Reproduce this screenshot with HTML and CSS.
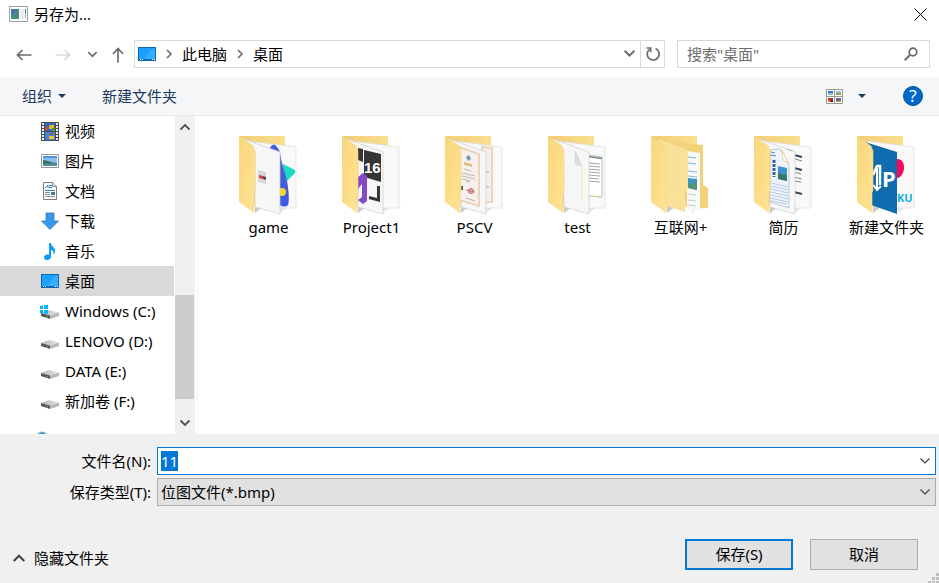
FILE: index.html
```html
<!DOCTYPE html>
<html lang="zh-CN">
<head>
  <meta charset="UTF-8">
  <meta name="viewport" content="width=device-width, initial-scale=1.0">
  <title>另存为...</title>
  <link rel="stylesheet" href="styles.css">
</head>
<body>
  <!-- Shared icon parts -->
  <svg class="defs" width="0" height="0" aria-hidden="true">
    <defs>
      <linearGradient id="flap-fill" x1="0" y1="0" x2="1" y2="1">
        <stop offset="0" stop-color="#f8d77c"/>
        <stop offset="1" stop-color="#ffe394"/>
      </linearGradient>
      <linearGradient id="back-fill" x1="0" y1="0" x2="1" y2="0">
        <stop offset="0" stop-color="#f1cd73"/>
        <stop offset="1" stop-color="#fadf8f"/>
      </linearGradient>
      <linearGradient id="shadow-fill" x1="0" y1="0" x2="1" y2="0">
        <stop offset="0" stop-color="#c8c8c8"/>
        <stop offset="1" stop-color="#ffffff"/>
      </linearGradient>
      <linearGradient id="drive-top" x1="0" y1="0" x2="1" y2="0">
        <stop offset="0" stop-color="#b4b4b4"/>
        <stop offset="1" stop-color="#e6e6e8"/>
      </linearGradient>
      <symbol id="folder-back" viewBox="0 0 62 80">
        <path d="M17 78l8-6-8-2zM42 78l8-6-8-4zM56 73l7-3-6-4z" fill="url(#shadow-fill)"/>
        <path d="M1 1h46v71H17z" fill="url(#back-fill)"/>
      </symbol>
      <symbol id="paper-back" viewBox="0 0 62 80">
        <path d="M11 6l47 6v61H40z" fill="#f9f9fa" stroke="#dcdcdc" stroke-width=".7"/>
      </symbol>
      <symbol id="paper-front" viewBox="0 0 62 80">
        <path d="M3 3l39 14v62l-25-7V16z" fill="#f7f7f8" stroke="#cfcfcf" stroke-width=".7"/>
      </symbol>
      <symbol id="folder-flap" viewBox="0 0 62 80">
        <path d="M1 1l14 10 2 5v39l-1 3v20L1 67z" fill="url(#flap-fill)"/>
        <path d="M1 1l14 10 2 5v39l-1 3v20" fill="none" stroke="#f3d384" stroke-width=".6"/>
      </symbol>
      <symbol id="icon-desktop" viewBox="0 0 18 14">
        <path d="M0 0h18v14H0z" fill="#0a6ab6"/>
        <path d="M1 1h16v11H1z" fill="#1ba1fb"/>
        <path d="M17 1v11H6L12 4z" fill="#36adff"/>
        <path d="M2 12h1v1H2zM4 12h1v1H4zM14 12h1v1h-1zM16 12h1v1h-1z" fill="#fff"/>
      </symbol>
      <symbol id="icon-drive" viewBox="0 0 18 18">
        <path d="M0 11l8-3 10 2.500-9 3z" fill="url(#drive-top)"/>
        <path d="M0 11l9 2.500V17l-9-3z" fill="#555756"/>
        <path d="M9 13.500l9-3V14l-9 3z" fill="#b8b8bc"/>
        <path d="M5 14l2 .5v1L5 15z" fill="#59c043"/>
      </symbol>
      <symbol id="icon-chevron" viewBox="0 0 12 12">
        <path d="M1.500 3.500L6 8l4.500-4.500" fill="none" stroke="currentColor" stroke-width="1.200"/>
      </symbol>
      <symbol id="icon-chevron-bold" viewBox="0 0 12 12">
        <path d="M1.500 3.500L6 8l4.500-4.500" fill="none" stroke="currentColor" stroke-width="1.800"/>
      </symbol>
      <symbol id="icon-chevron-right" viewBox="0 0 12 12">
        <path d="M4 2l4 4-4 4" fill="none" stroke="currentColor" stroke-width="1.600"/>
      </symbol>
      <symbol id="icon-triangle" viewBox="0 0 8 4">
        <path d="M0 0h8L4 4z" fill="currentColor"/>
      </symbol>
    </defs>
  </svg>

  <div class="dialog">
    <header class="titlebar">
      <svg class="app-icon" width="19" height="16" viewBox="0 0 19 16">
        <path d="M.5.500h18v15H.5z" fill="#fff" stroke="#9a9fa3"/>
        <path d="M2 3h8v10H2z" fill="#4a8a80"/>
        <path d="M2 3h8l-8 7z" fill="#4878a4"/>
        <path d="M11 3h4v10h-4z" fill="#eceef2"/>
        <path d="M16 3h1v4h-1z" fill="#3c6da0"/>
        <path d="M16 7h1v5h-1z" fill="#8fbfa4"/>
      </svg>
      <h1>另存为...</h1>
      <button type="button" class="close" aria-label="关闭">
        <svg width="13" height="13" viewBox="0 0 13 13"><path d="M.5.500l12 12M12.500.500l-12 12" stroke="#000"/></svg>
      </button>
    </header>

    <nav class="navbar">
      <div class="nav-buttons">
        <button type="button" class="back" aria-label="后退">
          <svg width="16" height="12" viewBox="0 0 16 12"><path d="M15.500 6H1.500M6.500 1l-5 5 5 5" fill="none" stroke="currentColor" stroke-width="1.700"/></svg>
        </button>
        <button type="button" class="forward" aria-label="前进" disabled>
          <svg width="16" height="12" viewBox="0 0 16 12"><path d="M.5 6h14M9.500 1l5 5-5 5" fill="none" stroke="currentColor" stroke-width="1.700"/></svg>
        </button>
        <button type="button" class="recent" aria-label="最近的位置">
          <svg width="11" height="11"><use href="#icon-chevron-bold"/></svg>
        </button>
        <button type="button" class="up" aria-label="上移">
          <svg width="12" height="16" viewBox="0 0 12 16"><path d="M6 15.500V1.500M1 7l5-5.500L11 7" fill="none" stroke="currentColor" stroke-width="1.700"/></svg>
        </button>
      </div>
      <div class="address">
        <svg width="18" height="14"><use href="#icon-desktop"/></svg>
        <svg class="crumb-arrow" width="12" height="12"><use href="#icon-chevron-right"/></svg>
        <a href="#">此电脑</a>
        <svg class="crumb-arrow" width="12" height="12"><use href="#icon-chevron-right"/></svg>
        <a href="#">桌面</a>
        <button type="button" class="history" aria-label="历史记录">
          <svg width="13" height="13"><use href="#icon-chevron-bold"/></svg>
        </button>
        <button type="button" class="refresh" aria-label="刷新">
          <svg width="16" height="16" viewBox="0 0 16 16"><path d="M10.500 2.500a6 6 0 1 1-6 .8M1.500 2h4.200v4.300" fill="none" stroke="currentColor" stroke-width="1.700"/></svg>
        </button>
      </div>
      <label class="search">
        <input type="search" placeholder='搜索"桌面"' aria-label="搜索">
        <svg width="14" height="14" viewBox="0 0 14 14"><circle cx="9" cy="5" r="3.800" fill="none" stroke="currentColor" stroke-width="1.700"/><path d="M6.200 7.800L.8 13.200" stroke="currentColor" stroke-width="2"/></svg>
      </label>
    </nav>

    <div class="toolbar">
      <button type="button">组织 <svg width="8" height="4"><use href="#icon-triangle"/></svg></button>
      <button type="button">新建文件夹</button>
      <button type="button" class="view" aria-label="更改视图">
        <svg width="17" height="15" viewBox="0 0 17 15">
          <path d="M.5.500h16v14H.5zM8.500.500v14M.5 7.500h16" fill="#fff" stroke="#989898"/>
          <path d="M2 2h5v2H2z" fill="#2c7bd0"/><path d="M2 4h5v2H2z" fill="#8cc6c4"/>
          <path d="M10 2h5v2h-5z" fill="#8fc1e8"/><path d="M10 4h5v2h-5z" fill="#79a64a"/><path d="M12 3h2v2h-2z" fill="#e0a33b"/>
          <path d="M2 9h5v4H2z" fill="#c72a1e"/><path d="M5 11h2v2H5z" fill="#453011"/><path d="M2 11h2v2H2z" fill="#e6812d"/>
          <path d="M10 9h5v4h-5z" fill="#2877cd"/><path d="M12 9h2v2h-2z" fill="#d34a2c"/><path d="M10 12h5v1h-5z" fill="#d9ae26"/>
        </svg>
        <svg width="8" height="4"><use href="#icon-triangle"/></svg>
      </button>
      <button type="button" class="help" aria-label="帮助">?</button>
    </div>

    <main class="browser">
      <ul class="tree">
        <li><a href="#">
          <svg width="18" height="19" viewBox="0 0 18 19">
            <path d="M0 0h18v19H0z" fill="#4a4a4a"/>
            <path d="M4 1h10v8H4z" fill="#356ac4"/><path d="M4 10h10v8H4z" fill="#4386dc"/>
            <path d="M8 3h5v4H8z" fill="#e6b829"/><path d="M4 5h3v3H4z" fill="#c64839"/><path d="M11 6h3v3h-3z" fill="#4a9a3c"/>
            <path d="M8 14h5v3H8z" fill="#edc738"/><path d="M9 11h3v2H9z" fill="#cb4735"/>
            <path d="M2 1v18M16 1v18" stroke="#f4f4f4" stroke-width="2" stroke-dasharray="2 1"/>
          </svg>视频</a></li>
        <li><a href="#">
          <svg width="18" height="14" viewBox="0 0 18 14">
            <path d="M.5.500h17v13H.5z" fill="#fff" stroke="#979797"/>
            <path d="M2 2h14v10H2z" fill="#88c0f0"/><path d="M2 2h14v2H2z" fill="#4b92df"/>
            <path d="M2 6c4 0 8 3 14 3v3H2z" fill="#35705f"/><path d="M2 10l14-1v3H2z" fill="#4f8fa4"/>
          </svg>图片</a></li>
        <li><a href="#">
          <svg width="18" height="18" viewBox="0 0 18 18">
            <path d="M2.500.500h9l4 4v13h-13z" fill="#fff" stroke="#7d7d7d"/>
            <path d="M11.500.500v4h4" fill="#e5e5e5" stroke="#8b8b8b"/>
            <path d="M4 6l3-3v3M8 3.500h3M8 5.500h3M4 8.500h10" fill="none" stroke="#2484c9"/>
            <path d="M4 10.500h5M4 12.500h5M4 14.500h10" stroke="#8d8d8d"/>
            <path d="M10 10h4v3h-4z" fill="#3578aa"/>
          </svg>文档</a></li>
        <li><a href="#">
          <svg width="18" height="18" viewBox="0 0 18 18"><path d="M5 1h8v8h4.500L9 17.500.5 9H5z" fill="#3a99ea" stroke="#2a78be" stroke-width=".8"/></svg>下载</a></li>
        <li><a href="#">
          <svg width="18" height="18" viewBox="0 0 18 18"><path d="M8 1h2c0 4 5 4 4 9-.3 1.700-1 2.500-1.600 3 .9-3-.4-4.600-2.400-5v7c0 2-2 3-4 3s-3-1.200-3-2.600C3 13 6 11.800 8 12.800z" fill="#0c9cf3"/></svg>音乐</a></li>
        <li class="selected"><a href="#">
          <svg width="18" height="14"><use href="#icon-desktop"/></svg>桌面</a></li>
        <li><a href="#">
          <svg width="18" height="18" viewBox="0 0 18 18" overflow="visible">
            <use href="#icon-drive" width="18" height="18"/>
            <path d="M-1 4l3-.5V7h-3zM3 3.300l4-.5V7H3zM-1 8h3v3.500l-3-.5zM3 8h4v4l-4-.4z" fill="#00b4f1"/>
          </svg>Windows (C:)</a></li>
        <li><a href="#"><svg width="18" height="18"><use href="#icon-drive"/></svg>LENOVO (D:)</a></li>
        <li><a href="#"><svg width="18" height="18"><use href="#icon-drive"/></svg>DATA (E:)</a></li>
        <li><a href="#"><svg width="18" height="18"><use href="#icon-drive"/></svg>新加卷 (F:)</a></li>
        <li class="network"><svg width="18" height="3" viewBox="0 0 18 3"><path d="M-4 3c2-3.500 8-3.500 10 0z" fill="#7dbdd2"/><path d="M-1 3l2-2 3 2z" fill="#3c88ad"/></svg></li>
      </ul>

      <div class="scrollbar">
        <button type="button" class="scroll-up" aria-label="向上滚动"><svg width="12" height="12"><use href="#icon-chevron-bold"/></svg></button>
        <div class="track"><div class="thumb"></div></div>
        <button type="button" aria-label="向下滚动"><svg width="12" height="12"><use href="#icon-chevron-bold"/></svg></button>
      </div>

      <ul class="files">
        <li>
          <svg width="62" height="80" viewBox="0 0 62 80">
            <use href="#folder-back"/><use href="#paper-back"/>
            <path d="M45 29l12 6v3L46 49z" fill="#19dcc1"/>
            <path d="M32 13c2-4 5-4 7-1l3 5c1 10 5 20 7 29 1 4 3 21 1 24-3 3-6 1-9 0z" fill="#415ce4"/>
            <path d="M40 14c3 18 7 28 10 45" fill="none" stroke="#655ac1"/>
            <circle cx="44" cy="57" r="4" fill="#f2dc23"/>
            <use href="#paper-front"/>
            <path d="M20 35l8 2v12l-8-2z" fill="#d8d8d8"/>
            <path d="M21 40l4 1v3l-4-1z" fill="#d6413b"/><path d="M25 41l3 1v3l-3-1z" fill="#554747"/>
            <use href="#folder-flap"/>
          </svg>
          <span>game</span>
        </li>
        <li>
          <svg width="62" height="80" viewBox="0 0 62 80">
            <use href="#folder-back"/><use href="#paper-back"/><use href="#paper-front"/>
            <path d="M17 13l5 1v13l-5-2zM23 15l17 4v28l-17-5z" fill="#353535"/>
            <text x="23" y="38" class="art-sixteen">16</text>
            <path d="M37.500 51v14L28 62.500" fill="none" stroke="#353535" stroke-width="3"/>
            <path d="M17 42l5-4 4 3v25l-4 3-5-4 4-3V49l-4 5z" fill="#8548c7"/>
            <use href="#folder-flap"/>
          </svg>
          <span>Project1</span>
        </li>
        <li>
          <svg width="62" height="80" viewBox="0 0 62 80">
            <use href="#folder-back"/><use href="#paper-back"/>
            <path d="M38 12l10 1v54H38z" fill="#f4eeec" stroke="#ecd5bd" stroke-width="2"/>
            <path d="M42 37h3M42 52h3" stroke="#a4a0a0"/>
            <use href="#paper-front"/>
            <path d="M15 12l20 7v52l-20-6z" fill="#f5efed" stroke="#ecd5bd" stroke-width="2"/>
            <path d="M22 22l3-2 2 4-3 2z" fill="#6c97bd"/>
            <path d="M20 27l8 2v3l-8-2z" fill="#dfc28b"/>
            <path d="M20 34l7 2M18 38l13 3M18 41l13 3M18 44l8 2M22 46l4 1M22 63l9 3" stroke="#b0aaaa" stroke-width=".8"/>
            <path d="M17 51h2v4h-2z" fill="#555"/>
            <circle cx="27" cy="56" r="2.500" fill="#e0a3a3" stroke="#c8757b"/>
            <path d="M22 55l9 2" stroke="#c8757b"/>
            <use href="#folder-flap"/>
          </svg>
          <span>PSCV</span>
        </li>
        <li>
          <svg width="62" height="80" viewBox="0 0 62 80">
            <use href="#folder-back"/><use href="#paper-back"/>
            <path d="M40 20l15 2v40l-13-1" fill="#fff" stroke="#b4bcc1"/>
            <path d="M41 21.500l14 2" stroke="#7c8991" stroke-width="1.500"/>
            <path d="M41 28l12 1M41 31l12 1M41 34l12 1M41 37l12 1M41 40l12 1M41 43l11 1M41 46l12 1" stroke="#a5a5a5"/>
            <path d="M46 61l7 1" stroke="#e7ca69"/>
            <use href="#paper-front"/>
            <path d="M17 15l13 1 5 15v36l-18-5z" fill="#f4f6f8"/>
            <path d="M28 17l7 15v34" fill="none" stroke="#f0e3ac"/>
            <path d="M28 16v13l7 2c-4-4-3-10-7-15z" fill="#dedfe1" stroke="#c6c8ca" stroke-width=".5"/>
            <use href="#folder-flap"/>
          </svg>
          <span>test</span>
        </li>
        <li>
          <svg width="62" height="80" viewBox="0 0 62 80">
            <use href="#folder-back"/>
            <path d="M15 6l38 4v40l5 3v20l-20 1z" fill="#f3d379"/>
            <path d="M37 16l13 2v59l-13-3z" fill="#f8f8f8"/>
            <path d="M38 22l8 1M38 28l8 1M38 36l9 1M38 41l9 1" stroke="#73bddb"/>
            <path d="M38 43l9 1v11l-9-2z" fill="#3b95c4"/><path d="M38 50l9-3v8l-9-2z" fill="#54917a"/>
            <path d="M38 59l8 1M38 65l8 1M38 70l8 1" stroke="#c8cdcf"/>
            <path d="M8 4l28 10 2 4v36l-3 3v20l-27-9z" fill="#fae19a"/>
            <path d="M18 11l10 8v36" fill="none" stroke="#f4d98f" stroke-width=".7"/>
            <use href="#folder-flap"/>
          </svg>
          <span>互联网+</span>
        </li>
        <li>
          <svg width="62" height="80" viewBox="0 0 62 80">
            <use href="#folder-back"/><use href="#paper-back"/>
            <path d="M41 20l8 2M41 33l8 2M41 57l8 2" stroke="#37465a" stroke-width="2"/>
            <path d="M42 24l7 2M41 37l7 2M41 42l8 2M41 46l7 1" stroke="#858585"/>
            <use href="#paper-front"/>
            <path d="M34 14l6 2" stroke="#999" stroke-dasharray="2 1"/>
            <path d="M17 15l10-1 9 16v43l-19-6z" fill="#edf4fb" stroke="#a7a8b5" stroke-width=".6"/>
            <path d="M29 15l6 13-5-3z" fill="#fff" stroke="#e3c985" stroke-width=".7"/>
            <path d="M18 17l4 1M17 20l6 1" stroke="#4684bd"/>
            <path d="M18 24l6 1v21l-6-1z" fill="#fff" stroke="#bcc8d7" stroke-width=".5"/>
            <path d="M21 25v17" stroke="#3161a1" stroke-width="3" stroke-dasharray="3 1"/>
            <path d="M25 31l9 2v13l-9-2z" fill="#4392d0"/><path d="M25 38l9 2v6l-9-2z" fill="#387a68"/>
            <path d="M18 48l17 4M18 51l17 4M18 54l17 4M18 57l17 4M18 60l17 4M18 63l17 4M18 66l16 3" stroke="#b0c5e5" stroke-width=".9"/>
            <use href="#folder-flap"/>
          </svg>
          <span>简历</span>
        </li>
        <li>
          <svg width="62" height="80" viewBox="0 0 62 80">
            <use href="#folder-back"/><use href="#paper-back"/>
            <path d="M41 24c6 0 7 5 7 9s-3 10-7 10z" fill="#f9065b"/>
            <path d="M6 6l35 11v62l-26-9z" fill="#0f6caf"/>
            <path d="M17 40l4-9h3v19" fill="none" stroke="#fff" stroke-width="2.500"/>
            <path d="M21 33v22M17.500 50l3.500 5 4-4" fill="none" stroke="#fff" stroke-width="2"/>
            <text x="26" y="52" class="art-p">P</text>
            <text x="41" y="67" class="art-ku">KU</text>
            <use href="#folder-flap"/>
          </svg>
          <span>新建文件夹</span>
        </li>
      </ul>
    </main>

    <form class="footer" id="save-form">
      <div class="fields">
        <label for="filename">文件名(N):</label>
        <div class="combo">
          <input type="text" id="filename" name="filename" value="11" autocomplete="off">
          <svg width="12" height="12"><use href="#icon-chevron"/></svg>
        </div>
        <label for="filetype">保存类型(T):</label>
        <div class="combo">
          <select id="filetype" name="filetype">
            <option>位图文件(*.bmp)</option>
          </select>
          <svg width="12" height="12"><use href="#icon-chevron"/></svg>
        </div>
      </div>
      <div class="actions">
        <button type="button" class="toggle"><svg width="14" height="14"><use href="#icon-chevron-bold"/></svg>隐藏文件夹</button>
        <button type="submit" class="btn primary">保存(S)</button>
        <button type="button" class="btn">取消</button>
      </div>
      <svg class="grip" width="11" height="10" viewBox="0 0 11 10"><path d="M8 0h3v3H8zM4 4h3v3H4zM8 4h3v3H8zM0 8h3v3H0zM4 8h3v3H4zM8 8h3v3H8z" fill="#bfbfbf"/></svg>
    </form>
  </div>

  <script>
    const filename = document.getElementById('filename');
    filename.focus();
    filename.select();

    document.getElementById('save-form').addEventListener('submit', function (event) {
      event.preventDefault();
    });
  </script>
</body>
</html>
```
FILE: styles.css
```css
* {
  box-sizing: border-box;
}

body {
  margin: 0;
  font-family: "Noto Sans", "Noto Sans CJK SC", sans-serif;
  font-size: 15px;
  line-height: 20px;
  color: #000;
  background-color: #fff;
}

button,
input,
select {
  font: inherit;
  color: inherit;
}

button {
  display: flex;
  align-items: center;
  justify-content: center;
  padding: 0;
  border: 0;
  background: none;
}

a {
  color: inherit;
  text-decoration: none;
}

ul {
  margin: 0;
  padding: 0;
  list-style: none;
}

svg {
  flex: none;
  display: block;
}

.defs {
  position: absolute;
}

.dialog {
  display: flex;
  flex-direction: column;
  min-height: 100vh;
}

/* Title bar */
.titlebar {
  display: flex;
  align-items: center;
  gap: 6px;
  height: 30px;
  padding: 0 12px 2px 9px;
}

.titlebar h1 {
  margin: 0;
  font-size: 15px;
  font-weight: normal;
}

.close {
  margin-left: auto;
}

/* Navigation */
.navbar {
  display: flex;
  align-items: center;
  height: 47px;
  padding: 0 9px 0 16px;
  color: #6b6b6b;
}

.nav-buttons {
  display: flex;
  align-items: center;
  width: 118px;
  padding-top: 2px;
}

.forward {
  margin-left: 23px;
  color: #dadada;
}

.recent {
  margin-left: 16px;
}

.up {
  margin-left: 14px;
}

.address,
.search {
  display: flex;
  align-items: center;
  height: 28px;
  border: 1px solid #d9d9d9;
}

.address {
  flex: 1;
  padding-left: 3px;
}

.address a {
  color: #000;
}

.crumb-arrow {
  margin: 0 7px;
}

.history {
  margin-left: auto;
}

.refresh {
  width: 24px;
  height: 26px;
  margin-left: 4px;
  border-left: 1px solid #d9d9d9;
}

.search {
  width: 253px;
  margin-left: 12px;
  padding: 0 11px 0 9px;
}

.search input {
  flex: 1;
  min-width: 0;
  padding: 0;
  border: 0;
  outline: 0;
  background: none;
  appearance: none;
}

.search input::placeholder {
  color: #6d6d6d;
}

/* Toolbar */
.toolbar {
  display: flex;
  align-items: center;
  gap: 36px;
  height: 39px;
  padding: 0 16px 0 22px;
  color: #1e395b;
  background-color: #f5f6f7;
  border-bottom: 1px solid #e8e9ea;
}

.toolbar button {
  gap: 6px;
}

.toolbar .view {
  gap: 15px;
  margin-left: auto;
  padding-right: 1px;
}

.toolbar .help {
  width: 20px;
  height: 20px;
  border: 1px solid #00529b;
  border-radius: 50%;
  font-size: 17px;
  color: #fff;
  background-color: #0068cc;
}

/* Tree and files */
.browser {
  display: flex;
  flex: 1;
}

.tree {
  width: 174px;
}

.tree a {
  display: flex;
  align-items: center;
  gap: 6px;
  height: 30px;
  padding-left: 41px;
}

.tree .selected {
  background-color: #d9d9d9;
}

.tree .network {
  padding: 15px 0 0 41px;
}

.network svg {
  overflow: visible;
}

.scrollbar {
  display: flex;
  flex-direction: column;
  width: 20px;
  margin-left: 1px;
  background-color: #f0f0f0;
  color: #505050;
}

.scrollbar button {
  height: 22px;
}

.scroll-up svg,
.toggle svg {
  transform: rotate(180deg);
}

.track {
  display: flex;
  flex: 1;
  align-items: flex-end;
}

.thumb {
  width: 19px;
  height: 38%;
  margin-bottom: 13px;
  background-color: #cdcdcd;
}

.files {
  display: flex;
  flex: 1;
  flex-wrap: wrap;
  align-content: flex-start;
  margin-left: 2px;
  padding: 19px 0 0 19px;
  border-left: 1px solid #f5f5f5;
}

.files li {
  display: flex;
  flex-direction: column;
  align-items: center;
  gap: 2px;
  width: 103px;
}

.art-sixteen {
  font-family: "Liberation Sans", sans-serif;
  font-size: 15px;
  font-weight: bold;
  fill: #fff;
}

.art-ku {
  font-size: 11px;
  font-weight: bold;
  fill: #18afe5;
}

.art-p {
  font-size: 22px;
  font-weight: bold;
  fill: #fff;
}

/* Footer */
.footer {
  position: relative;
  padding: 13px 3px 13px 0;
  background-color: #f0f0f0;
}

.fields {
  display: grid;
  grid-template-columns: 151px 1fr;
  gap: 3px 6px;
  align-items: center;
}

.fields label {
  text-align: right;
}

.combo {
  position: relative;
}

.combo input,
.combo select {
  display: block;
  width: 100%;
  height: 28px;
  padding: 0 24px 0 3px;
  border: 1px solid #adadad;
  border-radius: 0;
  outline: 0;
  appearance: none;
}

.combo input {
  border-color: #0078d7;
  background-color: #fff;
}

.combo select {
  background-color: #e1e1e1;
}

.combo input::selection {
  color: #fff;
  background-color: #0078d7;
}

.combo svg {
  position: absolute;
  top: 8px;
  right: 5px;
  color: #404040;
  pointer-events: none;
}

.actions {
  display: flex;
  align-items: center;
  gap: 17px;
  margin-top: 33px;
  padding: 0 18px 0 12px;
}

.toggle {
  gap: 8px;
  margin-right: auto;
  padding-top: 6px;
}

.toggle svg {
  color: #404040;
}

.btn {
  width: 108px;
  height: 31px;
  padding-bottom: 2px;
  border: 1px solid #adadad;
  background-color: #e1e1e1;
}

.btn.primary {
  border: 2px solid #0078d7;
}

.grip {
  position: absolute;
  right: 0;
  bottom: 0;
}
```
